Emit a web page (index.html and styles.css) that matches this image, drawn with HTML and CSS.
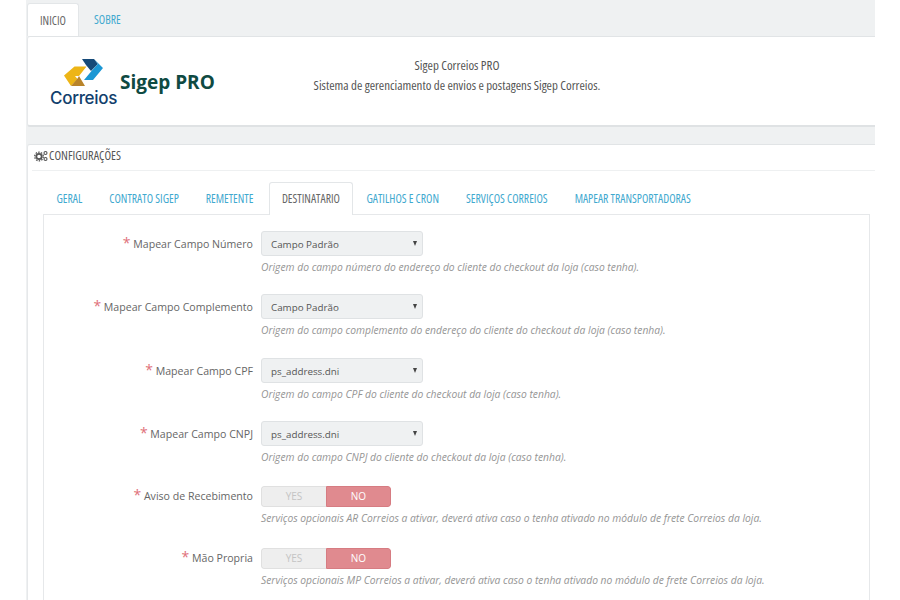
FILE: index.html
```html
<!DOCTYPE html>
<html lang="pt">
<head>
<meta charset="utf-8">
<title>Sigep PRO</title>
<link rel="stylesheet" href="styles.css">
</head>
<body>
<div class="page">
  <nav class="tabs top-tabs">
    <a class="tab active">INICIO</a>
    <a class="tab">SOBRE</a>
  </nav>
  <section class="panel intro">
    <div class="logo">
      <div class="logo-mark">
        <svg width="50" height="40" viewBox="0 0 50 40">
          <path d="M24 5H36L40 10L33 17L28 11Z" fill="#164a78"/>
          <path d="M36 5L45 14L35 26H26L33.500 17L40 10Z" fill="#1b97d4"/>
          <path d="M6 21.500L16.500 12.500H28.500L21 22H17L19.500 25L13 32Z" fill="#edb517"/>
          <path d="M13 32L19.500 24.500L21 22L27 32Z" fill="#b9842a"/>
        </svg>
        <span class="correios">Correios</span>
      </div>
      <span class="sigep">Sigep PRO</span>
    </div>
    <div class="intro-text">
      <p>Sigep Correios PRO</p>
      <p>Sistema de gerenciamento de envios e postagens Sigep Correios.</p>
    </div>
  </section>
  <section class="panel config">
    <header class="panel-head">
      <svg class="cogs" width="14" height="12" viewBox="0 0 14 12">
        <circle cx="5" cy="6.500" r="2.700" fill="none" stroke="#555" stroke-width="1.800"/>
        <circle cx="5" cy="6.500" r="4.300" fill="none" stroke="#555" stroke-width="1.300" stroke-dasharray="1.500 1.200"/>
        <circle cx="11.500" cy="3" r="1.500" fill="none" stroke="#555" stroke-width="1.100"/>
        <circle cx="11.500" cy="9" r="1.500" fill="none" stroke="#555" stroke-width="1.100"/>
      </svg>
      CONFIGURAÇÕES
    </header>
    <nav class="tabs inner-tabs">
      <a class="tab">GERAL</a>
      <a class="tab">CONTRATO SIGEP</a>
      <a class="tab">REMETENTE</a>
      <a class="tab active">DESTINATARIO</a>
      <a class="tab">GATILHOS E CRON</a>
      <a class="tab">SERVIÇOS CORREIOS</a>
      <a class="tab">MAPEAR TRANSPORTADORAS</a>
    </nav>
    <div class="form-box">
      <div class="row">
        <label><span class="req">*</span> Mapear Campo Número</label>
        <div class="field">
          <div class="select">Campo Padrão<span class="caret"></span></div>
          <p class="help">Origem do campo número do endereço do cliente do checkout da loja (caso tenha).</p>
        </div>
      </div>
      <div class="row">
        <label><span class="req">*</span> Mapear Campo Complemento</label>
        <div class="field">
          <div class="select">Campo Padrão<span class="caret"></span></div>
          <p class="help">Origem do campo complemento do endereço do cliente do checkout da loja (caso tenha).</p>
        </div>
      </div>
      <div class="row">
        <label><span class="req">*</span> Mapear Campo CPF</label>
        <div class="field">
          <div class="select">ps_address.dni<span class="caret"></span></div>
          <p class="help">Origem do campo CPF do cliente do checkout da loja (caso tenha).</p>
        </div>
      </div>
      <div class="row">
        <label><span class="req">*</span> Mapear Campo CNPJ</label>
        <div class="field">
          <div class="select">ps_address.dni<span class="caret"></span></div>
          <p class="help">Origem do campo CNPJ do cliente do checkout da loja (caso tenha).</p>
        </div>
      </div>
      <div class="row short">
        <label><span class="req">*</span> Aviso de Recebimento</label>
        <div class="field">
          <div class="switch"><span class="yes">YES</span><span class="no">NO</span></div>
          <p class="help">Serviços opcionais AR Correios a ativar, deverá ativa caso o tenha ativado no módulo de frete Correios da loja.</p>
        </div>
      </div>
      <div class="row short">
        <label><span class="req">*</span> Mão Propria</label>
        <div class="field">
          <div class="switch"><span class="yes">YES</span><span class="no">NO</span></div>
          <p class="help">Serviços opcionais MP Correios a ativar, deverá ativa caso o tenha ativado no módulo de frete Correios da loja.</p>
        </div>
      </div>
    </div>
  </section>
</div>
</body>
</html>
```
FILE: styles.css
```css
* { box-sizing: border-box; }
html, body { margin: 0; height: 600px; overflow: hidden; background: #fff; }
body { font-family: "Open Sans", sans-serif; font-size: 10.600px; color: #666; }
p { margin: 0; }

.page {
  width: 849px;
  height: 600px;
  margin-left: 26px;
  padding: 3px 0 0 1px;
  background: #eff1f2;
  overflow: hidden;
}

.tabs {
  display: flex;
  font-family: "Open Sans", sans-serif;
  font-stretch: 75%;
  font-size: 11.700px;
}
.tab { color: #3fa9cf; display: block; }
.tab.active {
  color: #666;
  background: #fff;
  border: 1px solid #e3e6e8;
  border-bottom: 0;
  border-radius: 3px 3px 0 0;
}

.top-tabs { height: 33px; }
.top-tabs .tab { padding: 9px 12px 0 15px; line-height: 14px; }
.top-tabs .tab:first-child { width: 52px; padding-left: 12px; }

.panel {
  background: #fff;
  border-top: 1px solid #e1e4e6;
  border-left: 1px solid #e6e8ea;
  border-radius: 3px 0 0 3px;
}
.intro {
  height: 91px;
  display: flex;
  border-bottom: 2px solid #dfe2e4;
}
.logo {
  width: 199px;
  padding: 21px 0 0 23px;
  display: flex;
  align-items: flex-start;
}
.logo-mark { position: relative; width: 69px; height: 50px; flex: none; }
.logo-mark svg { position: absolute; left: 7px; top: -4px; }
.correios {
  position: absolute;
  left: -1px;
  top: 30px;
  font-family: "Inter", sans-serif;
  font-weight: 500;
  font-size: 17px;
  line-height: 20px;
  color: #123f6d;
  letter-spacing: -.3px;
}
.sigep {
  margin: 12px 0 0 0;
  font-family: "Open Sans", sans-serif;
  font-weight: 700;
  font-size: 19px;
  line-height: 24px;
  color: #0f4a42;
  white-space: nowrap;
}
.intro-text {
  width: 460px;
  padding-top: 18px;
  text-align: center;
  font-family: "Open Sans", sans-serif;
  font-stretch: 75%;
  font-size: 12.950px;
  line-height: 20px;
  color: #555;
}

.config {
  margin-top: 17px;
  height: 460px;
  padding: 0 5px 0 0;
}
.panel-head {
  height: 26px;
  margin-left: 4px;
  padding: 4px 0 0 2px;
  border-bottom: 1px solid #eef0f1;
  margin-right: -5px;
  display: flex;
  align-items: flex-start;
  gap: 1px;
  font-stretch: 75%;
  font-size: 12.200px;
  line-height: 14px;
  color: #555;
}
.cogs { margin-top: 1px; }

.inner-tabs { height: 33px; margin: 11px 0 0 15px; }
.inner-tabs .tab { white-space: nowrap; line-height: 14px; }
.inner-tabs .tab:not(.active) { padding: 9px 13.500px 0; }
.inner-tabs .tab.active { margin-left: 2px; padding: 8px 12px 0; height: 33px; position: relative; z-index: 1; }

.form-box {
  margin: -1px 0 0 15px;
  height: 400px;
  padding-top: 16px;
  border: 1px solid #e6e8ea;
  border-bottom: 0;
}

.row { display: flex; height: 63.300px; }
.row.short { height: 62px; }
.row label {
  width: 209px;
  text-align: right;
  line-height: 27px;
  color: #666;
  white-space: nowrap;
}
.row.short label { line-height: 25px; }
.req { color: #e0707a; font-size: 14px; line-height: 14px; }
.field { margin-left: 8px; }
.select {
  position: relative;
  width: 162px;
  height: 25px;
  padding-left: 9px;
  background: #eff1f2;
  border: 1px solid #dfe2e4;
  border-radius: 3px;
  font-size: 9.800px;
  line-height: 25px;
  color: #555;
}
.caret {
  position: absolute;
  right: 5px;
  top: 9px;
  border-left: 2.500px solid transparent;
  border-right: 2.500px solid transparent;
  border-top: 5px solid #444;
}
.help {
  margin-top: 4px;
  font-size: 10.300px;
  line-height: 14px;
  font-style: italic;
  color: #959595;
  white-space: nowrap;
}
.switch {
  display: flex;
  width: 130px;
  height: 21px;
  margin-top: 2px;
  border-radius: 3px;
  overflow: hidden;
  font-size: 10px;
  line-height: 19px;
  text-align: center;
}
.switch + .help { margin-top: 4px; }
.yes { width: 65px; background: #eeeeee; color: #c4c4c4; border: 1px solid #e0e0e0; border-right: 0; border-radius: 3px 0 0 3px; }
.no { width: 65px; background: #e08a8f; color: #fff; border: 1px solid #d67c82; border-radius: 0 3px 3px 0; }
```
